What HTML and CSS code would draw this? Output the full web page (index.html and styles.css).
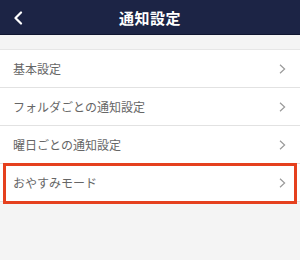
FILE: index.html
```html
<!DOCTYPE html>
<html lang="ja">
<head>
    <meta charset="UTF-8">
    <meta name="viewport" content="width=device-width, initial-scale=1.0">
    <title>通知設定</title>
    <link rel="stylesheet" href="styles.css">
</head>
<body>

<div class="header">
    <button class="back" aria-label="戻る">
        <svg width="10" height="14" viewBox="0 0 10 14">
            <path d="M8 1.5 L2.5 7 L8 12.5" fill="none" stroke="#fff" stroke-width="2.2" stroke-linecap="round" stroke-linejoin="round"/>
        </svg>
    </button>
    <h1 class="title">通知設定</h1>
</div>

<ul class="menu">
    <li class="item">基本設定
        <svg class="arrow" width="7" height="10" viewBox="0 0 7 10"><path d="M1 0.8 L5.6 5 L1 9.2"/></svg>
    </li>
    <li class="item">フォルダごとの通知設定
        <svg class="arrow" width="7" height="10" viewBox="0 0 7 10"><path d="M1 0.8 L5.6 5 L1 9.2"/></svg>
    </li>
    <li class="item">曜日ごとの通知設定
        <svg class="arrow" width="7" height="10" viewBox="0 0 7 10"><path d="M1 0.8 L5.6 5 L1 9.2"/></svg>
    </li>
    <li class="item highlight">おやすみモード
        <svg class="arrow" width="7" height="10" viewBox="0 0 7 10"><path d="M1 0.8 L5.6 5 L1 9.2"/></svg>
    </li>
</ul>

</body>
</html>
```

FILE: styles.css
```css
/* Reset */
* {
    margin: 0;
    padding: 0;
    box-sizing: border-box;
    font-family: "Noto Sans CJK JP", "Noto Sans", sans-serif;
}

body {
    width: 300px;
    height: 260px;
    background-color: #f4f4f4;
    overflow: hidden;
}

.header {
    height: 35px;
    background-color: #1c2445;
    border-bottom: 1px solid #0f1530;
    display: flex;
    align-items: center;
    justify-content: center;
    position: relative;
}

.back {
    position: absolute;
    left: 13px;
    top: 11px;
    background: none;
    border: none;
    display: flex;
}

.title {
    color: #fff;
    font-size: 15px;
    font-weight: bold;
    letter-spacing: 0.5px;
}

.menu {
    list-style: none;
    margin-top: 15px;
    background-color: #fff;
    box-shadow: 0 -1px 0 #e6e6e6;
}

.item {
    height: 38px;
    padding: 0 13px;
    display: flex;
    align-items: center;
    justify-content: space-between;
    font-size: 12px;
    color: #666;
    border-bottom: 1px solid #e2e2e2;
}

.arrow {
    margin-right: 1px;
    fill: none;
    stroke: #9a9a9a;
    stroke-width: 1.2;
}

.highlight {
    position: relative;
}

/* red frame drawn around the last row */
.highlight::after {
    content: "";
    position: absolute;
    top: -1px;
    bottom: -3px;
    left: 3px;
    right: 3px;
    border: 3.5px solid #e5401e;
}
```
